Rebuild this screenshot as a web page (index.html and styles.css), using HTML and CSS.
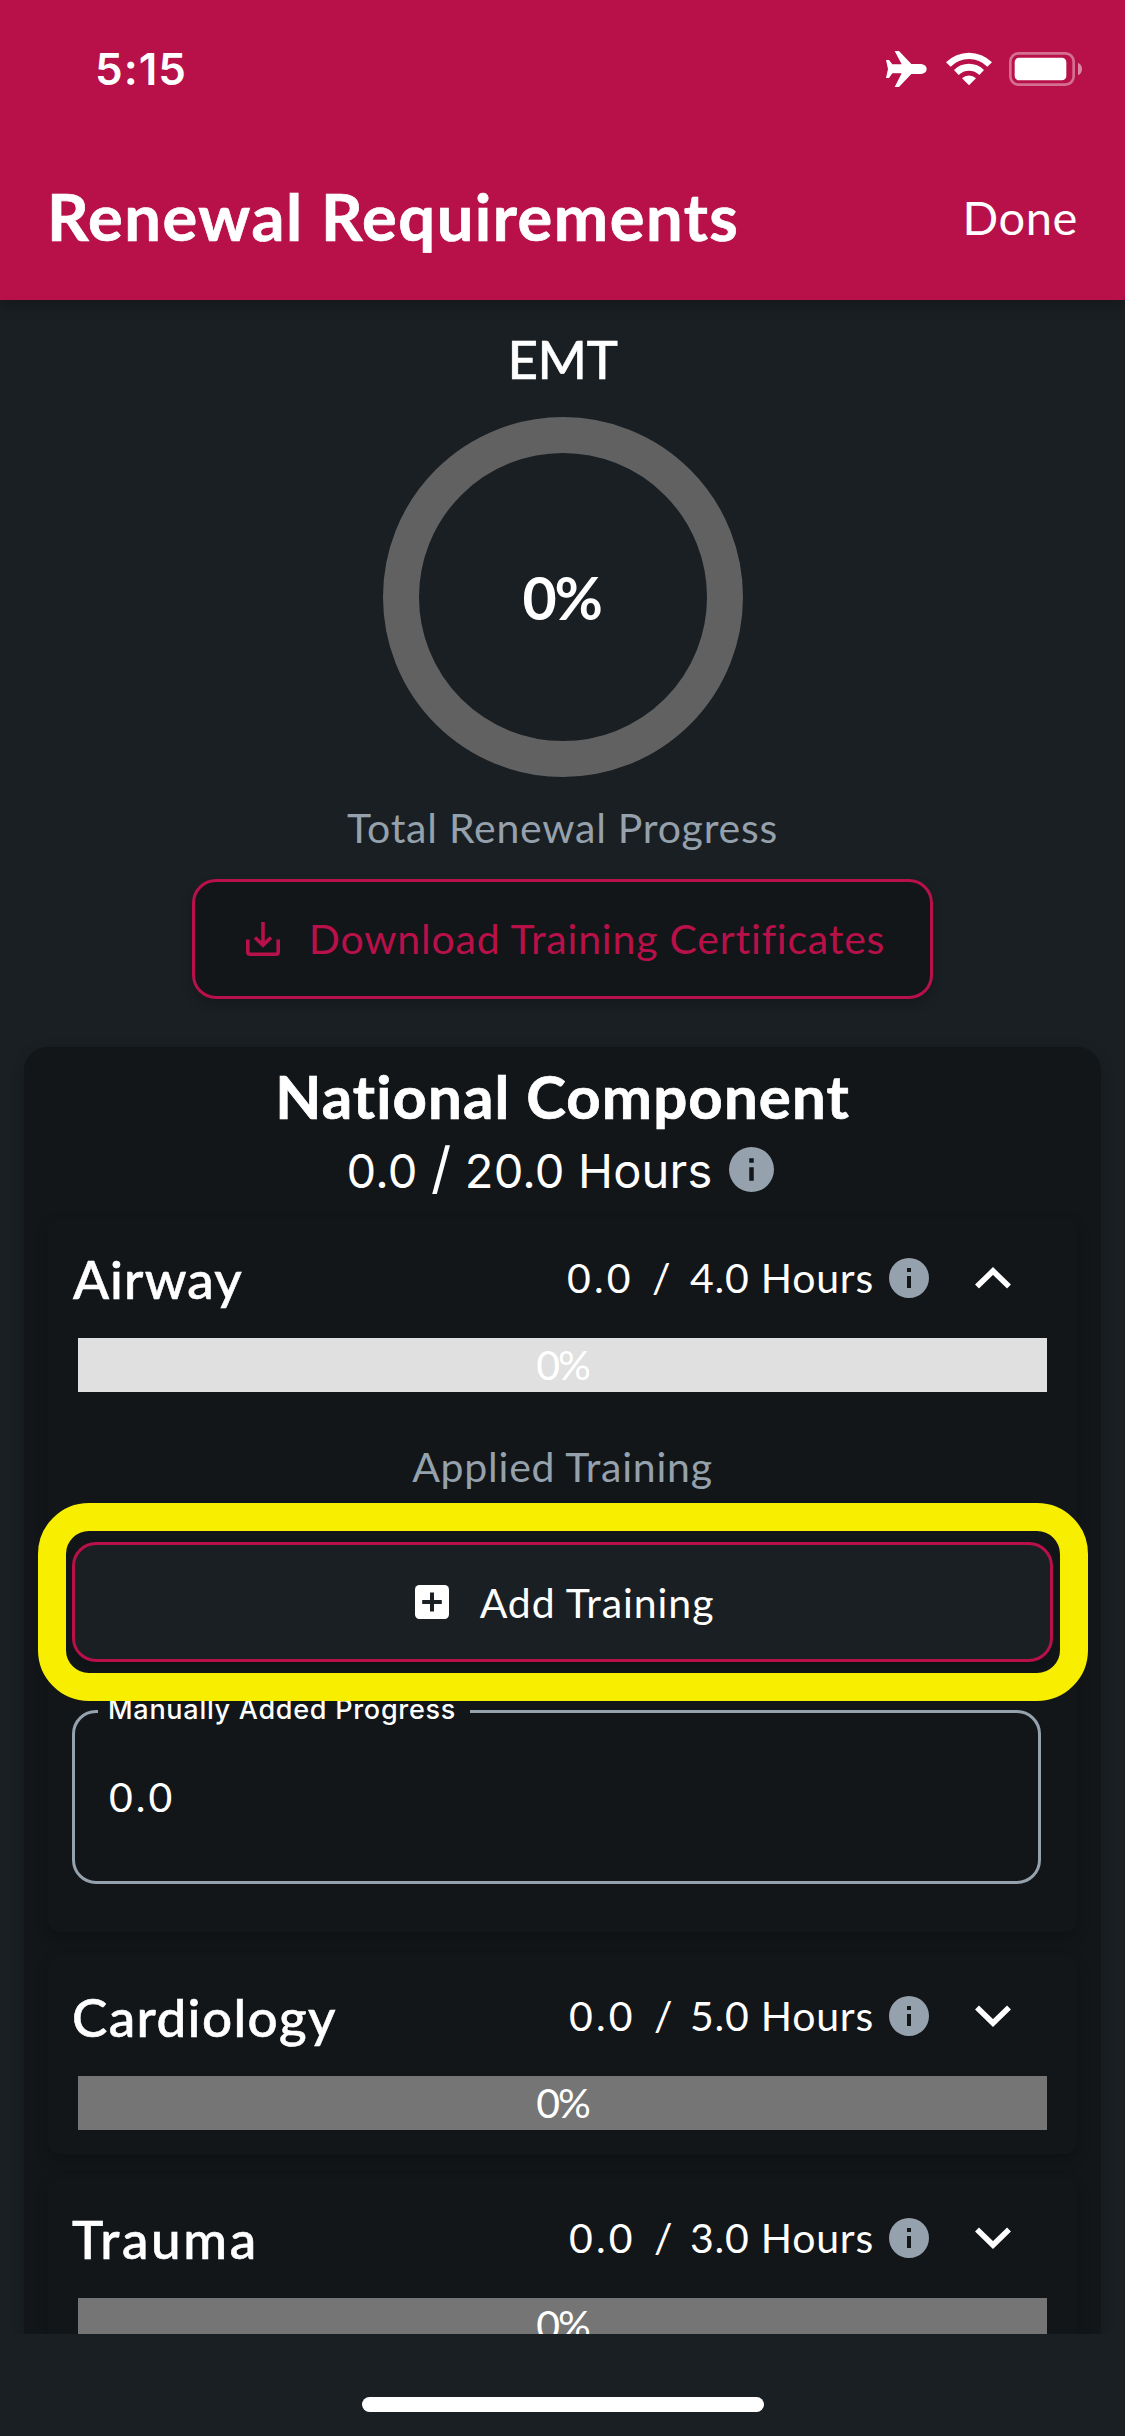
FILE: index.html
```html
<!DOCTYPE html>
<html lang="en">
<head>
<meta charset="utf-8">
<title>Renewal Requirements</title>
<link rel="stylesheet" href="styles.css">
</head>
<body>
<svg class="defs" aria-hidden="true">
  <symbol id="info" viewBox="0 0 40 40">
    <path fill-rule="evenodd" d="M20 0a20 20 0 1 0 0 40a20 20 0 1 0 0-40zM18 10h4v4h-4zM18 18h4v12h-4z"/>
  </symbol>
  <symbol id="chevron" viewBox="0 0 36 22">
    <path d="M2 2.5L18 18L34 2.5" fill="none" stroke="#fff" stroke-width="5.6"/>
  </symbol>
</svg>
<div class="screen">
  <header class="header">
    <div class="status">
      <span class="time">5:15</span>
      <svg class="status-icons" viewBox="0 0 795 240" fill="#fff">
        <path d="M78 90H87L97 103H125L104 63H117L154 102H184Q200 105 200 117Q200 129 184 132H154L117 171H104L125 130H97L87 144H78L84 117Z"/>
        <path d="M258 97A97 97 0 0 1 396 97L382 110A78 78 0 0 0 272 110Z"/>
        <path d="M282 120A63 63 0 0 1 372 120L358 135A44 44 0 0 0 296 135Z"/>
        <path d="M306 145A30 30 0 0 1 348 145L327 166Z"/>
        <rect x="451" y="70" width="190" height="94" rx="25" fill="none" stroke="#fff" stroke-opacity=".4" stroke-width="8"/>
        <rect x="464" y="83" width="155" height="68" rx="13"/>
        <path d="M654 98Q666 104 666 117Q666 130 654 136Z" fill-opacity=".5"/>
      </svg>
    </div>
    <div class="toolbar">
      <h1 class="title">Renewal Requirements</h1>
      <span class="done">Done</span>
    </div>
  </header>

  <main class="content">
    <div class="level">EMT</div>
    <div class="ring"><span class="ring-value">0%</span></div>
    <div class="caption">Total Renewal Progress</div>
    <div class="button download">
      <svg class="icon" viewBox="0 0 34 34" fill="none" stroke="currentColor" stroke-width="3.6">
        <path d="M1.8 17.5V30Q1.8 32.2 4 32.2H30Q32.2 32.2 32.2 30V17.5M17 0V23M9 15.5L17 23.2L25 15.5"/>
      </svg>
      <span>Download Training Certificates</span>
    </div>

    <section class="card">
      <h2 class="card-title">National Component</h2>
      <div class="card-hours"><span>0.0 <span class="tall">/</span> 20.0 Hours</span><svg class="info-large"><use href="#info"/></svg></div>

      <article class="panel">
        <div class="panel-head">
          <h3 class="name airway">Airway</h3>
          <span class="earned">0.0</span><span class="slash wide">/</span><span class="needed">4.0 Hours</span>
          <svg class="info"><use href="#info"/></svg>
          <svg class="chevron open"><use href="#chevron"/></svg>
        </div>
        <div class="bar light"><span>0%</span></div>
        <div class="applied">Applied Training</div>
        <div class="button add">
          <svg class="icon" viewBox="0 0 34 34">
            <rect width="34" height="34" rx="4.5" fill="#fff"/>
            <path d="M17 7.5V26.5M7.2 17H26.8" stroke="#1a1f23" stroke-width="4"/>
          </svg>
          <span>Add Training</span>
        </div>
        <div class="field">
          <label class="field-label">Manually Added Progress</label>
          <span class="field-value">0.0</span>
        </div>
      </article>

      <article class="panel">
        <div class="panel-head">
          <h3 class="name cardiology">Cardiology</h3>
          <span class="earned">0.0</span><span class="slash">/</span><span class="needed">5.0 Hours</span>
          <svg class="info"><use href="#info"/></svg>
          <svg class="chevron"><use href="#chevron"/></svg>
        </div>
        <div class="bar"><span>0%</span></div>
      </article>

      <article class="panel">
        <div class="panel-head">
          <h3 class="name trauma">Trauma</h3>
          <span class="earned">0.0</span><span class="slash">/</span><span class="needed">3.0 Hours</span>
          <svg class="info"><use href="#info"/></svg>
          <svg class="chevron"><use href="#chevron"/></svg>
        </div>
        <div class="bar"><span>0%</span></div>
      </article>
    </section>
  </main>

  <footer class="footer"><div class="home-bar"></div></footer>
</div>
</body>
</html>
```
FILE: styles.css
```css
* { box-sizing: border-box; }
body { margin: 0; background: #1a1f23; }
h1, h2, h3 { margin: 0; }
svg { display: block; flex: none; }
.defs { position: absolute; width: 0; height: 0; }

.screen {
  width: 1125px;
  height: 2436px;
  display: flex;
  flex-direction: column;
  overflow: hidden;
  background: #1a1f23;
  color: #fff;
  font: 400 41px/1.2 Lato, "Liberation Sans", sans-serif;
  letter-spacing: .76px;
  white-space: nowrap;
}

/* Header */
.header {
  flex: none;
  height: 300px;
  position: relative;
  z-index: 1;
  background: #b81048;
  box-shadow: 0 6px 12px rgba(0, 0, 0, .22);
}
.status {
  height: 140px;
  display: flex;
  align-items: center;
  justify-content: space-between;
  padding-left: 95px;
}
.time { font: 600 44px/1.2 Inter, sans-serif; letter-spacing: 1px; padding-bottom: 1px; }
.status-icons { width: 265px; height: 80px; }
.toolbar {
  height: 151px;
  display: flex;
  align-items: center;
  justify-content: space-between;
  padding: 0 47px;
}
.title { font-size: 65px; font-weight: 700; letter-spacing: 1.5px; -webkit-text-stroke: .7px #fff; }
.done { font-size: 47px; letter-spacing: .6px; padding-top: 3px; }

/* Summary */
.content {
  height: 2034px;
  flex: none;
  overflow: hidden;
  display: flex;
  flex-direction: column;
  align-items: center;
}
.content > * { flex: none; }
.level { height: 117px; line-height: 117px; font-size: 53px; font-weight: 500; letter-spacing: -.5px; -webkit-text-stroke: .5px #fff; }
.ring {
  width: 360px;
  height: 360px;
  border: 36px solid #616161;
  border-radius: 50%;
  display: flex;
  align-items: center;
  justify-content: center;
}
.ring-value { font-size: 59px; font-weight: 700; letter-spacing: -2.4px; margin-right: 2px; padding-top: 2px; }
.caption { height: 102px; line-height: 102px; color: #95a1ac; }

.button {
  height: 120px;
  display: flex;
  align-items: center;
  justify-content: center;
  border: 3px solid #b81048;
  border-radius: 24px;
  box-shadow: 0 6px 12px rgba(0, 0, 0, .2);
}
.icon { width: 34px; height: 34px; }
.download { width: 741px; gap: 29px; padding-left: 6px; background: #121619; color: #b81048; letter-spacing: .8px; }

/* National component card */
.card {
  width: 1077px;
  margin-top: 48px;
  padding: 0 24px 24px;
  border-radius: 24px;
  background: #121619;
  box-shadow: 0 4px 14px rgba(0, 0, 0, .2);
}
.card-title { height: 98px; line-height: 99px; text-align: center; font-size: 60px; font-weight: 700; letter-spacing: 1.08px; -webkit-text-stroke: .7px #fff; }
.card-hours {
  height: 49px;
  display: flex;
  align-items: center;
  justify-content: center;
  gap: 16px;
  padding-right: 5px;
  font: 400 47px/49px Inter, sans-serif;
  letter-spacing: .2px;
}
.tall { font-size: 56px; line-height: 49px; }
.info-large { width: 45px; height: 45px; fill: #95a1ac; }

.panel {
  margin-top: 24px;
  padding: 0 24px 24px;
  border-radius: 12px;
  background: #121619;
  box-shadow: 0 6px 14px rgba(0, 0, 0, .22);
}
.panel-head { height: 120px; display: flex; align-items: center; padding-right: 42px; }
.name { flex: 1; padding-top: 1px; font-size: 53px; font-weight: 500; -webkit-text-stroke: .6px #fff; }
.airway { letter-spacing: 1.1px; padding-left: 1px; }
.cardiology { letter-spacing: 1.39px; }
.trauma { letter-spacing: 2.6px; }
.earned { width: 85px; letter-spacing: 3.2px; }
.slash { width: 36px; }
.slash.wide { width: 38px; }
.needed { width: 199px; }
.info { width: 40px; height: 40px; fill: #95a1ac; }
.chevron { width: 36px; height: 22px; margin-left: 46px; }
.chevron.open { transform: rotate(180deg); }
.bar {
  height: 54px;
  margin: 0 6px;
  line-height: 54px;
  text-align: center;
  background: #757575;
  letter-spacing: -2px;
}
.bar.light { background: #e0e0e0; }
.applied { height: 150px; line-height: 150px; text-align: center; color: #95a1ac; }
.add {
  position: relative;
  gap: 31px;
  padding-left: 4px;
  background: #1a1f23;
  letter-spacing: .9px;
}
.add span { padding-top: 1px; }
/* Highlight ring around the add button */
.add::after {
  content: "";
  position: absolute;
  z-index: 2;
  inset: -42px -38px -42px -37px;
  border: 28px solid #f7ee00;
  border-radius: 51px;
}
.field {
  position: relative;
  height: 174px;
  margin: 48px 12px 24px 0;
  display: flex;
  align-items: center;
  padding-left: 34px;
  border: 3px solid #95a1ac;
  border-radius: 24px;
}
.field-label {
  position: absolute;
  left: 23px;
  top: -22px;
  width: 372px;
  height: 36px;
  padding-left: 10px;
  background: #121619;
  font: 500 27px/37px Inter, sans-serif;
  letter-spacing: .72px;
}
.field-value { letter-spacing: 3px; }

/* Home indicator */
.footer { flex: 1; display: flex; justify-content: center; align-items: flex-start; padding-top: 63px; }
.home-bar { width: 402px; height: 15px; border-radius: 8px; background: #fff; }
```
